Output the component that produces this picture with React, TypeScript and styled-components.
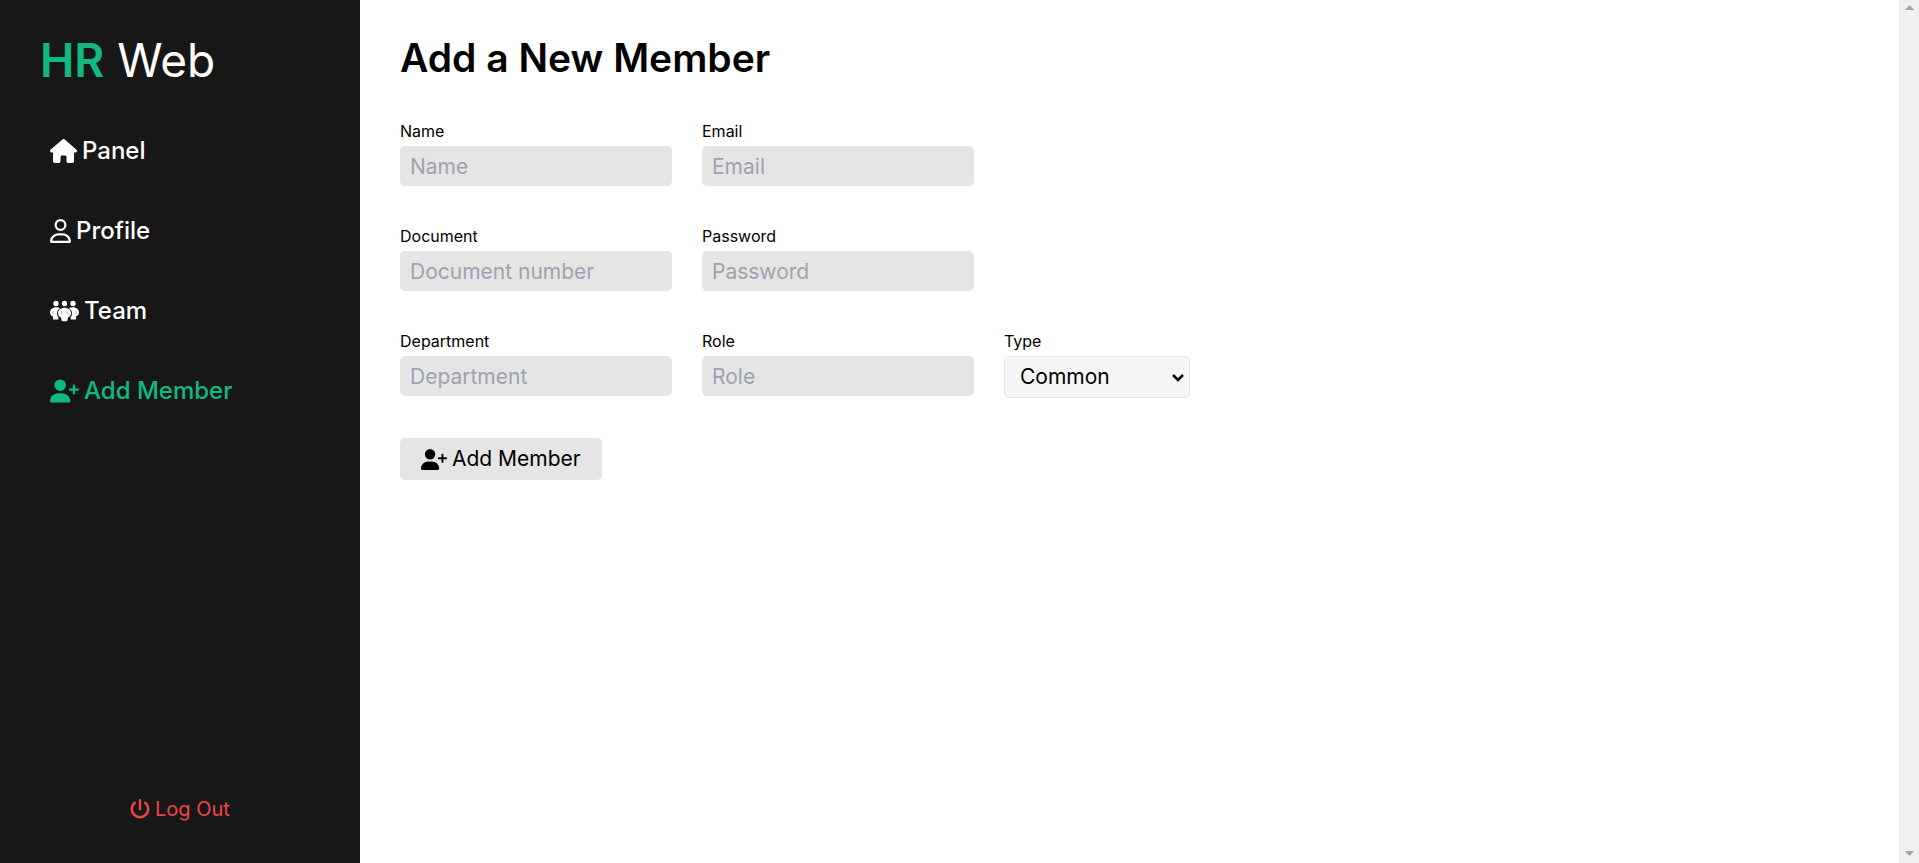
import React from 'react';
import styled, { createGlobalStyle } from 'styled-components';
import { FaHouse, FaRegUser, FaUserPlus, FaPowerOff } from 'react-icons/fa6';

const GlobalStyle = createGlobalStyle`
  *, *::before, *::after { box-sizing: border-box; }
  body {
    margin: 0;
    background: #ffffff;
    color: #000000;
    font-family: Inter, "Open Sans", sans-serif;
    font-size: 21px;
    line-height: 28px;
  }
  input, select, button { font: inherit; color: inherit; }
`;

const Page = styled.div`
  display: flex;
  min-height: 100vh;
`;

const Sidebar = styled.aside`
  display: flex;
  flex-direction: column;
  flex: 0 0 360px;
  padding: 32px 40px;
  background: #171717;
  color: #ffffff;
`;

const Logo = styled.div`
  font-size: 46px;
  line-height: 56px;

  strong {
    color: #10b981;
    font-weight: 600;
  }
`;

const Nav = styled.nav`
  display: flex;
  flex-direction: column;
  gap: 48px;
  padding: 47px 10px;
`;

const NavLink = styled.a<{ $active?: boolean; $iconWidth: number }>`
  display: flex;
  align-items: center;
  gap: 5px;
  color: ${({ $active }) => ($active ? '#10b981' : '#ffffff')};
  font-size: 24px;
  font-weight: 500;
  line-height: 32px;
  text-decoration: none;

  svg {
    width: ${({ $iconWidth }) => $iconWidth}px;
    height: 24px;
  }
`;

const LogoutButton = styled.button`
  display: flex;
  align-items: center;
  align-self: center;
  gap: 5px;
  margin-top: auto;
  padding: 8px;
  border: 0;
  background: transparent;
  color: #ef4444;
  font-size: 20px;
  cursor: pointer;
`;

const Main = styled.main`
  flex: 1;
  padding: 36px 40px;
`;

const Title = styled.h1`
  margin: 0 0 41px;
  font-size: 39px;
  font-weight: 600;
  line-height: 44px;
`;

const Form = styled.form`
  display: flex;
  flex-direction: column;
  align-items: flex-start;
  gap: 40px;
`;

const Row = styled.div`
  display: flex;
  flex-wrap: wrap;
  align-items: flex-start;
  gap: 30px;
`;

const Field = styled.div<{ $width: number }>`
  display: flex;
  flex-direction: column;
  gap: 5px;
  width: ${({ $width }) => $width}px;
`;

const Label = styled.label`
  font-size: 16px;
  line-height: 20px;
`;

const Input = styled.input`
  width: 100%;
  height: 40px;
  padding: 0 10px;
  border: 0;
  border-radius: 5px;
  background: #e5e5e5;

  &::placeholder {
    color: #9ca3af;
    opacity: 1;
  }
`;

const Select = styled.select`
  width: 100%;
  height: 42px;
  padding: 0 32px 0 15px;
  border: 1px solid #e5e5e5;
  border-radius: 5px;
  background: #f5f5f5;
  appearance: none;
`;

const SelectBox = styled.div`
  position: relative;

  svg {
    position: absolute;
    top: 17px;
    right: 6px;
    pointer-events: none;
  }
`;

const SubmitButton = styled.button`
  display: flex;
  align-items: center;
  gap: 5px;
  height: 42px;
  padding: 0 21px;
  border: 0;
  border-radius: 5px;
  background: #e5e5e5;
  cursor: pointer;

  svg {
    width: 26px;
    height: 21px;
  }
`;

const ScrollTrack = styled.div`
  display: flex;
  flex-direction: column;
  flex: 0 0 20px;
  align-items: center;
  justify-content: space-between;
  padding: 5px 0 7px;
  background: #f0f0f0;
`;

function TeamIcon() {
  return (
    <svg viewBox="0 -3 87 69" fill="currentColor" aria-hidden="true">
      <circle cx="18" cy="9" r="8" />
      <circle cx="43.500" cy="9" r="8" />
      <circle cx="69" cy="9" r="8" />
      <path d="M18 20C8 20 0 27 0 36c0 7 4 10 9 12v9h16v-7c-3-4-4-8-4-12 0-7 4-12 9-15-3-2-7-3-12-3Z" />
      <path d="M69 20c10 0 18 7 18 16 0 7-4 10-9 12v9H62v-7c3-4 4-8 4-12 0-7-4-12-9-15 3-2 7-3 12-3Z" />
      <path d="M43.500 22C32 22 24 29 24 38c0 7 4 11 10 14v6q0 4 4 4h11q4 0 4-4v-6c6-3 10-7 10-14 0-9-8-16-19.500-16Z" />
      <path d="M9 31v10M34 32v10M53 32v10M78 31v10" stroke="#171717" strokeWidth="1" />
    </svg>
  );
}

const links = [
  { label: 'Panel', icon: <FaHouse />, iconWidth: 27 },
  { label: 'Profile', icon: <FaRegUser />, iconWidth: 21 },
  { label: 'Team', icon: <TeamIcon />, iconWidth: 29 },
  { label: 'Add Member', icon: <FaUserPlus />, iconWidth: 29, active: true },
];

type TextFieldProps = { id: string; label: string; placeholder?: string; type?: string };

function TextField({ id, label, placeholder = label, type = 'text' }: TextFieldProps) {
  return (
    <Field $width={272}>
      <Label htmlFor={id}>{label}</Label>
      <Input id={id} name={id} type={type} placeholder={placeholder} />
    </Field>
  );
}

export default function App() {
  return (
    <>
      <GlobalStyle />
      <Page>
        <Sidebar>
          <Logo><strong>HR</strong> Web</Logo>
          <Nav>
            {links.map(({ label, icon, iconWidth, active }) => (
              <NavLink key={label} href="#" $active={active} $iconWidth={iconWidth}>{icon}{label}</NavLink>
            ))}
          </Nav>
          <LogoutButton type="button"><FaPowerOff size={20} />Log Out</LogoutButton>
        </Sidebar>
        <Main>
          <Title>Add a New Member</Title>
          <Form>
            <Row>
              <TextField id="name" label="Name" />
              <TextField id="email" label="Email" type="email" />
            </Row>
            <Row>
              <TextField id="document" label="Document" placeholder="Document number" />
              <TextField id="password" label="Password" type="password" />
            </Row>
            <Row>
              <TextField id="department" label="Department" />
              <TextField id="role" label="Role" />
              <Field $width={186}>
                <Label htmlFor="type">Type</Label>
                <SelectBox>
                  <Select id="type" name="type"><option>Common</option></Select>
                  <svg width="12" height="9" viewBox="0 0 12 9" fill="none" stroke="#000000" strokeWidth="2.500" aria-hidden="true">
                    <path d="m1 2 5 5 5-5" />
                  </svg>
                </SelectBox>
              </Field>
            </Row>
            <SubmitButton type="button"><FaUserPlus />Add Member</SubmitButton>
          </Form>
        </Main>
        <ScrollTrack aria-hidden="true">
          <svg width="9" height="5" viewBox="0 0 9 5" fill="#a3a3a3"><path d="M0 5 4.500 0 9 5Z" /></svg>
          <svg width="9" height="5" viewBox="0 0 9 5" fill="#a3a3a3"><path d="M0 0h9L4.500 5Z" /></svg>
        </ScrollTrack>
      </Page>
    </>
  );
}
